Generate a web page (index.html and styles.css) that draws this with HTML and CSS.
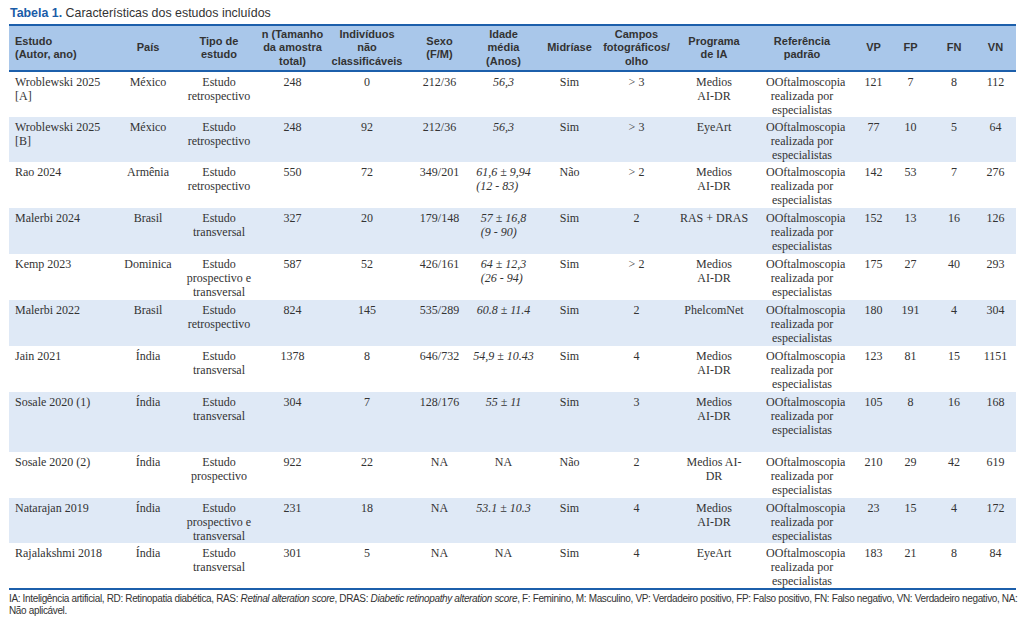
FILE: index.html
```html
<!DOCTYPE html>
<html lang="pt">
<head>
<meta charset="utf-8">
<title>Tabela 1</title>
<link rel="stylesheet" href="styles.css">
</head>
<body>
<div class="page">
  <div class="title"><b>Tabela 1.</b> Características dos estudos incluídos</div>
  <table class="data">
    <colgroup>
      <col class="w-estudo"><col class="w-pais"><col class="w-tipo"><col class="w-n"><col class="w-ind"><col class="w-sexo"><col class="w-idade"><col class="w-mid"><col class="w-campos"><col class="w-prog"><col class="w-ref"><col class="w-vp"><col class="w-fp"><col class="w-fn"><col class="w-vn">
    </colgroup>
    <thead>
      <tr>
        <th class="c-estudo">Estudo<br>(Autor, ano)</th>
        <th>País</th>
        <th>Tipo de<br>estudo</th>
        <th>n (Tamanho<br>da amostra<br>total)</th>
        <th>Indivíduos<br>não<br>classificáveis</th>
        <th class="c-sexo">Sexo<br>(F/M)</th>
        <th>Idade<br>média<br>(Anos)</th>
        <th>Midríase</th>
        <th class="c-campos">Campos<br>fotográficos/<br>olho</th>
        <th class="c-prog">Programa<br>de IA</th>
        <th class="c-ref">Referência<br>padrão</th>
        <th class="c-vp">VP</th>
        <th class="c-fp">FP</th>
        <th>FN</th>
        <th>VN</th>
      </tr>
    </thead>
    <tbody>
      <tr class="r46">
        <td class="c-estudo">Wroblewski 2025<br>[A]</td><td>México</td><td>Estudo<br>retrospectivo</td><td>248</td><td>0</td><td class="c-sexo">212/36</td>
        <td><span class="age">56,3</span></td><td>Sim</td><td class="c-campos">&gt; 3</td><td class="c-prog">Medios<br>AI-DR</td>
        <td class="c-ref">OOftalmoscopia<br>realizada por<br>especialistas</td><td class="c-vp">121</td><td class="c-fp">7</td><td>8</td><td>112</td>
      </tr>
      <tr class="r45">
        <td class="c-estudo">Wroblewski 2025<br>[B]</td><td>México</td><td>Estudo<br>retrospectivo</td><td>248</td><td>92</td><td class="c-sexo">212/36</td>
        <td><span class="age">56,3</span></td><td>Sim</td><td class="c-campos">&gt; 3</td><td class="c-prog">EyeArt</td>
        <td class="c-ref">OOftalmoscopia<br>realizada por<br>especialistas</td><td class="c-vp">77</td><td class="c-fp">10</td><td>5</td><td>64</td>
      </tr>
      <tr class="r46">
        <td class="c-estudo">Rao 2024</td><td>Armênia</td><td>Estudo<br>retrospectivo</td><td>550</td><td>72</td><td class="c-sexo">349/201</td>
        <td><span class="age">61,6 ± 9,94<br>(12 - 83)</span></td><td>Não</td><td class="c-campos">&gt; 2</td><td class="c-prog">Medios<br>AI-DR</td>
        <td class="c-ref">OOftalmoscopia<br>realizada por<br>especialistas</td><td class="c-vp">142</td><td class="c-fp">53</td><td>7</td><td>276</td>
      </tr>
      <tr class="r46">
        <td class="c-estudo">Malerbi 2024</td><td>Brasil</td><td>Estudo<br>transversal</td><td>327</td><td>20</td><td class="c-sexo">179/148</td>
        <td><span class="age">57 ± 16,8<br>(9 - 90)</span></td><td>Sim</td><td class="c-campos">2</td><td class="c-prog">RAS + DRAS</td>
        <td class="c-ref">OOftalmoscopia<br>realizada por<br>especialistas</td><td class="c-vp">152</td><td class="c-fp">13</td><td>16</td><td>126</td>
      </tr>
      <tr class="r46">
        <td class="c-estudo">Kemp 2023</td><td>Dominica</td><td>Estudo<br>prospectivo e<br>transversal</td><td>587</td><td>52</td><td class="c-sexo">426/161</td>
        <td><span class="age">64 ± 12,3<br>(26 - 94)</span></td><td>Sim</td><td class="c-campos">&gt; 2</td><td class="c-prog">Medios<br>AI-DR</td>
        <td class="c-ref">OOftalmoscopia<br>realizada por<br>especialistas</td><td class="c-vp">175</td><td class="c-fp">27</td><td>40</td><td>293</td>
      </tr>
      <tr class="r46">
        <td class="c-estudo">Malerbi 2022</td><td>Brasil</td><td>Estudo<br>retrospectivo</td><td>824</td><td>145</td><td class="c-sexo">535/289</td>
        <td><span class="age">60.8 ± 11.4</span></td><td>Sim</td><td class="c-campos">2</td><td class="c-prog">PhelcomNet</td>
        <td class="c-ref">OOftalmoscopia<br>realizada por<br>especialistas</td><td class="c-vp">180</td><td class="c-fp">191</td><td>4</td><td>304</td>
      </tr>
      <tr class="r46">
        <td class="c-estudo">Jain 2021</td><td>Índia</td><td>Estudo<br>transversal</td><td>1378</td><td>8</td><td class="c-sexo">646/732</td>
        <td><span class="age">54,9 ± 10.43</span></td><td>Sim</td><td class="c-campos">4</td><td class="c-prog">Medios<br>AI-DR</td>
        <td class="c-ref">OOftalmoscopia<br>realizada por<br>especialistas</td><td class="c-vp">123</td><td class="c-fp">81</td><td>15</td><td>1151</td>
      </tr>
      <tr class="r60">
        <td class="c-estudo">Sosale 2020 (1)</td><td>Índia</td><td>Estudo<br>transversal</td><td>304</td><td>7</td><td class="c-sexo">128/176</td>
        <td><span class="age">55 ± 11</span></td><td>Sim</td><td class="c-campos">3</td><td class="c-prog">Medios<br>AI-DR</td>
        <td class="c-ref">OOftalmoscopia<br>realizada por<br>especialistas</td><td class="c-vp">105</td><td class="c-fp">8</td><td>16</td><td>168</td>
      </tr>
      <tr class="r46">
        <td class="c-estudo">Sosale 2020 (2)</td><td>Índia</td><td>Estudo<br>prospectivo</td><td>922</td><td>22</td><td class="c-sexo">NA</td>
        <td>NA</td><td>Não</td><td class="c-campos">2</td><td class="c-prog">Medios AI-<br>DR</td>
        <td class="c-ref">OOftalmoscopia<br>realizada por<br>especialistas</td><td class="c-vp">210</td><td class="c-fp">29</td><td>42</td><td>619</td>
      </tr>
      <tr class="r45">
        <td class="c-estudo">Natarajan 2019</td><td>Índia</td><td>Estudo<br>prospectivo e<br>transversal</td><td>231</td><td>18</td><td class="c-sexo">NA</td>
        <td><span class="age">53.1 ± 10.3</span></td><td>Sim</td><td class="c-campos">4</td><td class="c-prog">Medios<br>AI-DR</td>
        <td class="c-ref">OOftalmoscopia<br>realizada por<br>especialistas</td><td class="c-vp">23</td><td class="c-fp">15</td><td>4</td><td>172</td>
      </tr>
      <tr class="r46 last">
        <td class="c-estudo">Rajalakshmi 2018</td><td>Índia</td><td>Estudo<br>transversal</td><td>301</td><td>5</td><td class="c-sexo">NA</td>
        <td>NA</td><td>Sim</td><td class="c-campos">4</td><td class="c-prog">EyeArt</td>
        <td class="c-ref">OOftalmoscopia<br>realizada por<br>especialistas</td><td class="c-vp">183</td><td class="c-fp">21</td><td>8</td><td>84</td>
      </tr>
    </tbody>
  </table>
  <p class="foot">IA: Inteligência artificial, RD: Retinopatia diabética, RAS: <i>Retinal alteration score</i>, DRAS: <i>Diabetic retinopathy alteration score</i>, F: Feminino, M: Masculino, VP: Verdadeiro positivo, FP: Falso positivo, FN: Falso negativo, VN: Verdadeiro negativo, NA:<br>Não aplicável.</p>
</div>
</body>
</html>
```

FILE: styles.css
```css
body {
  margin: 0;
  background: #ffffff;
  color: #333333;
  font-family: "Liberation Serif", "Times New Roman", serif;
}

.page {
  padding: 6px 0 0 9px;
  width: 1007px;
}

.title {
  font-family: "Liberation Sans", Arial, sans-serif;
  font-size: 12.4px;
  line-height: 15px;
  color: #333333;
  margin: 0 0 3px 1px;
}

.title b {
  color: #1a5ca8;
}

.data {
  border-collapse: collapse;
  table-layout: fixed;
  width: 1007px;
}

.w-estudo { width: 104px; }
.w-pais { width: 70px; }
.w-tipo { width: 72px; }
.w-n { width: 75px; }
.w-ind { width: 74px; }
.w-sexo { width: 67px; }
.w-idade { width: 65px; }
.w-mid { width: 67px; }
.w-campos { width: 72px; }
.w-prog { width: 83px; }
.w-ref { width: 80px; }
.w-vp { width: 54px; }
.w-fp { width: 41px; }
.w-fn { width: 42px; }
.w-vn { width: 41px; }

.data th {
  background: #a9c7ea;
  color: #333333;
  font-family: "Liberation Sans", Arial, sans-serif;
  font-weight: bold;
  font-size: 11px;
  line-height: 13.5px;
  height: 44px;
  padding: 0;
  text-align: center;
  vertical-align: middle;
  white-space: nowrap;
  border-top: 2px solid #1c5fab;
  border-bottom: 2px solid #1c5fab;
}

.data td {
  font-size: 12px;
  line-height: 14px;
  padding: 3px 0 0 0;
  text-align: center;
  vertical-align: top;
  white-space: nowrap;
}

.data tbody tr:nth-child(even) td {
  background: #dfe9f6;
}

.r45 { height: 45px; }
.r46 { height: 46px; }
.r60 { height: 60px; }

.data tr.last td {
  border-bottom: 2px solid #1c5fab;
}

.data .c-estudo {
  text-align: left;
  padding-left: 6px;
}

.data .c-sexo { padding-left: 4px; }
.data .c-campos { padding-right: 5px; }
.data .c-prog { padding-right: 5px; }
.data .c-ref { padding-left: 8px; }
.data .c-vp { padding-left: 17px; }
.data .c-fp { padding-right: 4px; }

.age {
  display: inline-block;
  text-align: left;
  font-style: italic;
}

.foot {
  margin: 3px 0 0 0;
  font-family: "Liberation Sans", Arial, sans-serif;
  font-size: 10px;
  line-height: 12px;
  letter-spacing: -0.35px;
  color: #333333;
  white-space: nowrap;
}
```
